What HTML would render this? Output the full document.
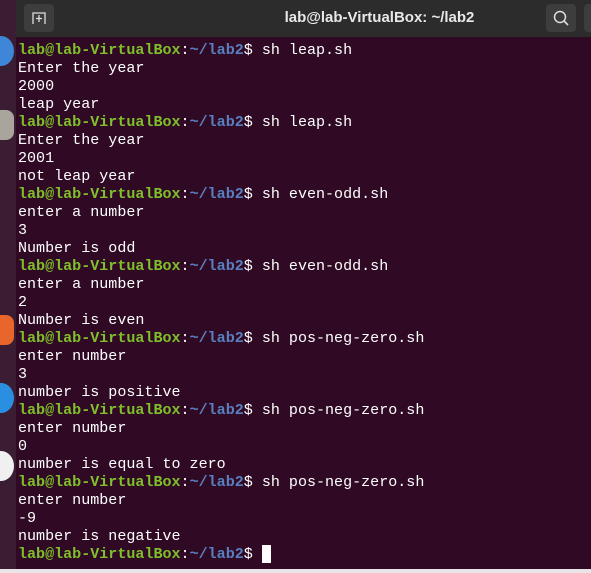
<!DOCTYPE html><html><head><style>
body{margin:0;width:591px;height:573px;overflow:hidden;background:#300a24;position:relative;font-family:"Liberation Mono",monospace}
#dock{position:absolute;left:0;top:0;width:16px;height:573px;background:#3b1d33}
#hdr{position:absolute;left:16px;top:0;width:575px;height:37px;background:#2c2c2c}
.btn{position:absolute;top:4px;width:30px;height:28px;background:#3d3d3d;border-radius:4px}
#title{position:absolute;top:9px;left:0;width:100%;text-align:center;padding-left:152px;box-sizing:border-box;color:#e8e8e8;font:bold 15px "Liberation Sans",sans-serif}
#term{position:absolute;left:18px;top:41px;color:#fff;font-size:15.05px;line-height:18px;white-space:pre}
.g{font-weight:bold;color:#7fbf2a}.b{font-weight:bold;color:#5a7fc0}
.ic{position:absolute;left:-12px;width:26px;height:30px;border-radius:8px}
</style></head><body>
<div id="dock">
<div class="ic" style="top:36px;background:#3d86d8;border-radius:50%"></div>
<div class="ic" style="top:110px;background:#a9a49c"></div>
<div class="ic" style="top:315px;background:#e8652b"></div>
<div class="ic" style="top:383px;background:#2a8fe0;border-radius:50%"></div>
<div class="ic" style="top:451px;background:#f0f0f0;border-radius:50%"></div>
</div>
<div style="position:absolute;left:0;top:569px;width:591px;height:4px;background:#e8e4e8"></div>
<div id="hdr">
<div class="btn" style="left:8px"><svg width="30" height="28"><path d="M9 20V9h12v11M15 11v7M12 14.5h6" stroke="#ddd" stroke-width="1.3" fill="none"/></svg></div>
<div id="title">lab@lab-VirtualBox: ~/lab2</div>
<div class="btn" style="left:530px"><svg width="30" height="28"><circle cx="14" cy="13" r="5.5" stroke="#ddd" stroke-width="1.5" fill="none"/><path d="M18 17l4 4" stroke="#ddd" stroke-width="1.6"/></svg></div>
<div class="btn" style="left:568px"></div>
</div>
<div id="term"><span class="g">lab@lab-VirtualBox</span>:<span class="b">~/lab2</span>$ sh leap.sh
Enter the year
2000
leap year
<span class="g">lab@lab-VirtualBox</span>:<span class="b">~/lab2</span>$ sh leap.sh
Enter the year
2001
not leap year
<span class="g">lab@lab-VirtualBox</span>:<span class="b">~/lab2</span>$ sh even-odd.sh
enter a number
3
Number is odd
<span class="g">lab@lab-VirtualBox</span>:<span class="b">~/lab2</span>$ sh even-odd.sh
enter a number
2
Number is even
<span class="g">lab@lab-VirtualBox</span>:<span class="b">~/lab2</span>$ sh pos-neg-zero.sh
enter number
3
number is positive
<span class="g">lab@lab-VirtualBox</span>:<span class="b">~/lab2</span>$ sh pos-neg-zero.sh
enter number
0
number is equal to zero
<span class="g">lab@lab-VirtualBox</span>:<span class="b">~/lab2</span>$ sh pos-neg-zero.sh
enter number
-9
number is negative
<span class="g">lab@lab-VirtualBox</span>:<span class="b">~/lab2</span>$ <span style="background:#fff"> </span></div>
</body></html>
